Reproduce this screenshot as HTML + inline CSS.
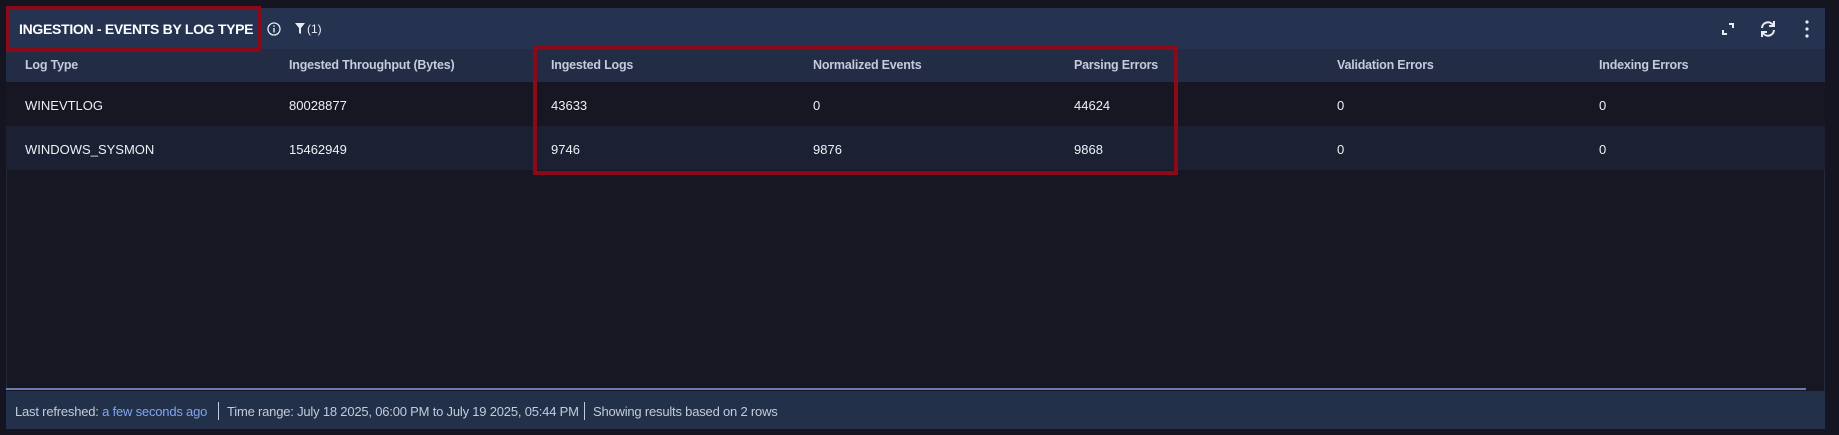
<!DOCTYPE html>
<html><head><meta charset="utf-8"><style>
*{box-sizing:border-box;margin:0;padding:0}
body{width:1839px;height:435px;background:#141520;font-family:"Liberation Sans",sans-serif;position:relative;overflow:hidden}
.a{position:absolute}
.panel{left:6px;top:8px;width:1819px;height:421px;background:#161722;border:1px solid #222a3c}
.hdr{left:6px;top:8px;width:1819px;height:41px;background:#253350}
.th{left:6px;top:49px;width:1819px;height:33px;background:#222c45}
.r1{left:6px;top:82px;width:1819px;height:44px;background:#161722}
.r2{left:6px;top:126px;width:1819px;height:44px;background:#1b2133}
.ft{left:6px;top:391px;width:1819px;height:38px;background:#233049}
.line{left:6px;top:388px;width:1800px;height:2px;background:#6a7bb0}
.t{font-size:13px;white-space:nowrap}
.h{color:#c3cbdc;font-weight:bold;font-size:12.5px;top:58px;letter-spacing:-0.2px}
.c{color:#eef0f4;top:98px}
.c2{color:#eef0f4;top:142px}
.box{border:4px solid #8a0a1a}
.f{color:#c3cbdc;top:404px;font-size:13px;letter-spacing:-0.2px}
.sep{width:1px;height:18px;background:#c3cbdc;top:402px}
</style></head><body>
<div class="a panel"></div>
<div class="a hdr"></div>
<div class="a th"></div>
<div class="a r1"></div>
<div class="a r2"></div>
<div class="a line"></div>
<div class="a ft"></div>
<div class="a box" style="left:6px;top:6px;width:255px;height:46px"></div>
<div class="a t" style="left:19px;top:21px;color:#fff;font-weight:bold;font-size:14px;letter-spacing:-0.3px">INGESTION - EVENTS BY LOG TYPE</div>
<svg class="a" style="left:267px;top:22px" width="14" height="14" viewBox="0 0 14 14"><circle cx="7" cy="7" r="6" fill="none" stroke="#e8ebf2" stroke-width="1.3"/><rect x="6.3" y="6" width="1.4" height="4.5" fill="#e8ebf2"/><rect x="6.3" y="3.4" width="1.4" height="1.4" fill="#e8ebf2"/></svg>
<svg class="a" style="left:295px;top:23px" width="10" height="11" viewBox="0 0 10 11"><path d="M0 0H10L6 5V11L4 10V5Z" fill="#e8ebf2"/></svg>
<div class="a t" style="left:307px;top:22px;color:#e8ebf2;font-size:12px">(1)</div>
<svg class="a" style="left:1722px;top:23px" width="12" height="12" viewBox="0 0 12 12" fill="none" stroke="#e8ebf2" stroke-width="2"><path d="M1 7V11H5M7 1H11V5"/></svg>
<svg class="a" style="left:1759px;top:20px" width="18" height="18" viewBox="0 0 18 18" fill="none" stroke="#e8ebf2" stroke-width="2"><path d="M3 8A6 6 0 0 1 14 5"/><path d="M15 10A6 6 0 0 1 4 13"/><path d="M15 1V6H10" /><path d="M3 17V12H8"/></svg>
<svg class="a" style="left:1805px;top:20px" width="4" height="18" viewBox="0 0 4 18" fill="#e8ebf2"><circle cx="2" cy="2" r="1.6"/><circle cx="2" cy="9" r="1.6"/><circle cx="2" cy="16" r="1.6"/></svg>
<div class="a t h" style="left:25px">Log Type</div>
<div class="a t h" style="left:289px">Ingested Throughput (Bytes)</div>
<div class="a t h" style="left:551px">Ingested Logs</div>
<div class="a t h" style="left:813px">Normalized Events</div>
<div class="a t h" style="left:1074px">Parsing Errors</div>
<div class="a t h" style="left:1337px">Validation Errors</div>
<div class="a t h" style="left:1599px">Indexing Errors</div>
<div class="a t c" style="left:25px">WINEVTLOG</div>
<div class="a t c" style="left:289px">80028877</div>
<div class="a t c" style="left:551px">43633</div>
<div class="a t c" style="left:813px">0</div>
<div class="a t c" style="left:1074px">44624</div>
<div class="a t c" style="left:1337px">0</div>
<div class="a t c" style="left:1599px">0</div>
<div class="a t c2" style="left:25px">WINDOWS_SYSMON</div>
<div class="a t c2" style="left:289px">15462949</div>
<div class="a t c2" style="left:551px">9746</div>
<div class="a t c2" style="left:813px">9876</div>
<div class="a t c2" style="left:1074px">9868</div>
<div class="a t c2" style="left:1337px">0</div>
<div class="a t c2" style="left:1599px">0</div>
<div class="a box" style="left:533px;top:46px;width:645px;height:129px"></div>
<div class="a t f" style="left:15px">Last refreshed: <span style="color:#7ea6f2">a few seconds ago</span></div>
<div class="a sep" style="left:218px"></div>
<div class="a t f" style="left:227px">Time range: July 18 2025, 06:00 PM to July 19 2025, 05:44 PM</div>
<div class="a sep" style="left:584px"></div>
<div class="a t f" style="left:593px">Showing results based on 2 rows</div>
</body></html>
